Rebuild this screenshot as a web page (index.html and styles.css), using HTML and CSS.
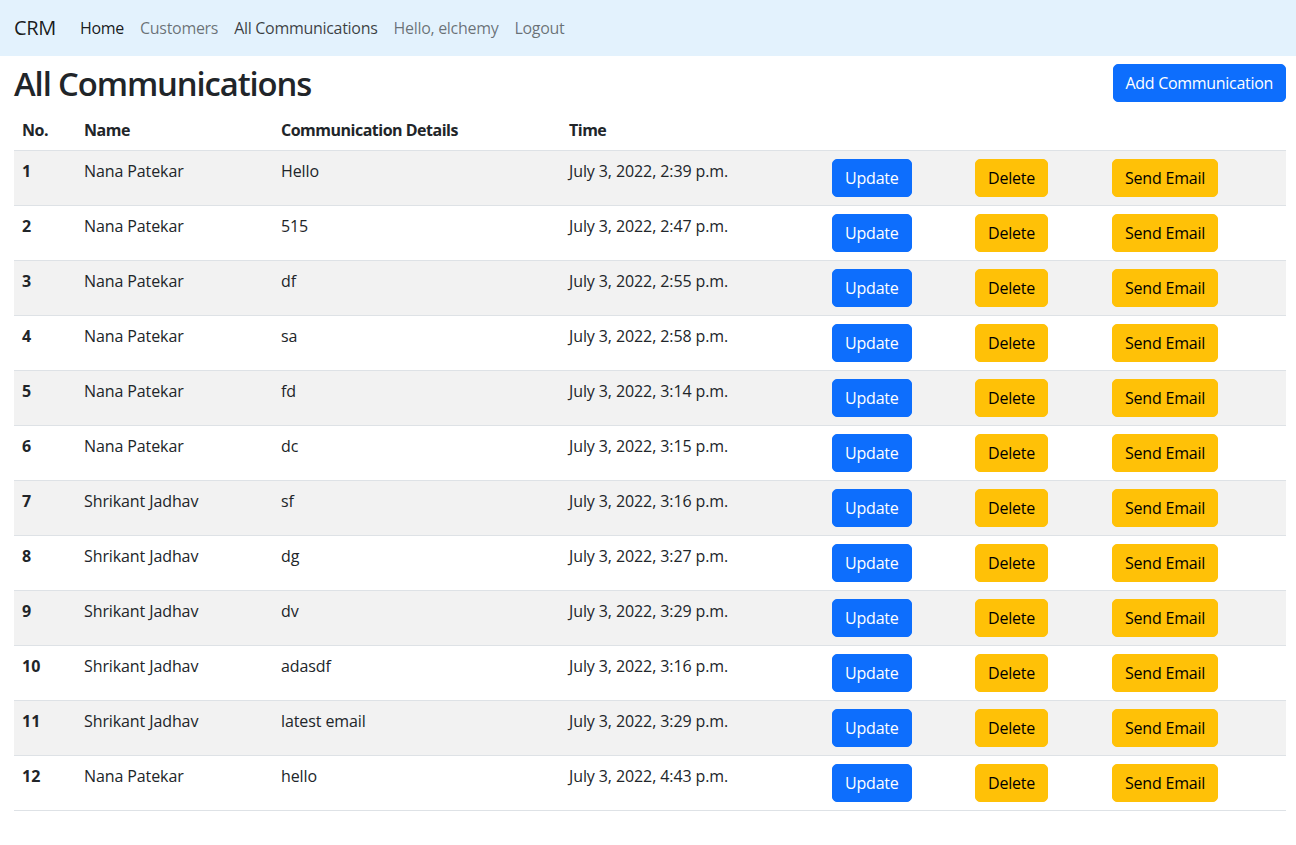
FILE: index.html
```html
<!DOCTYPE html>
<html lang="en">
<head>
<meta charset="utf-8">
<title>CRM - All Communications</title>
<link rel="stylesheet" href="styles.css">
</head>
<body>
<nav class="navbar">
  <a class="brand" href="#">CRM</a>
  <ul class="nav">
    <li><a class="nav-link active" href="#">Home</a></li>
    <li><a class="nav-link" href="#">Customers</a></li>
    <li><a class="nav-link current" href="#">All Communications</a></li>
    <li><a class="nav-link" href="#">Hello, elchemy</a></li>
    <li><a class="nav-link" href="#">Logout</a></li>
  </ul>
</nav>
<main class="page">
  <div class="page-head">
    <h2 class="title">All Communications</h2>
    <a class="btn btn-primary btn-add" href="#">Add Communication</a>
  </div>
  <table class="table">
    <colgroup>
      <col class="c-no"><col class="c-name"><col class="c-details"><col class="c-time"><col class="c-upd"><col class="c-del"><col class="c-mail">
    </colgroup>
    <thead>
      <tr><th>No.</th><th>Name</th><th>Communication Details</th><th>Time</th><th></th><th></th><th></th></tr>
    </thead>
    <tbody>
      <tr><th>1</th><td>Nana Patekar</td><td>Hello</td><td>July 3, 2022, 2:39 p.m.</td><td><a class="btn btn-primary" href="#">Update</a></td><td><a class="btn btn-warning" href="#">Delete</a></td><td><a class="btn btn-warning" href="#">Send Email</a></td></tr>
      <tr><th>2</th><td>Nana Patekar</td><td>515</td><td>July 3, 2022, 2:47 p.m.</td><td><a class="btn btn-primary" href="#">Update</a></td><td><a class="btn btn-warning" href="#">Delete</a></td><td><a class="btn btn-warning" href="#">Send Email</a></td></tr>
      <tr><th>3</th><td>Nana Patekar</td><td>df</td><td>July 3, 2022, 2:55 p.m.</td><td><a class="btn btn-primary" href="#">Update</a></td><td><a class="btn btn-warning" href="#">Delete</a></td><td><a class="btn btn-warning" href="#">Send Email</a></td></tr>
      <tr><th>4</th><td>Nana Patekar</td><td>sa</td><td>July 3, 2022, 2:58 p.m.</td><td><a class="btn btn-primary" href="#">Update</a></td><td><a class="btn btn-warning" href="#">Delete</a></td><td><a class="btn btn-warning" href="#">Send Email</a></td></tr>
      <tr><th>5</th><td>Nana Patekar</td><td>fd</td><td>July 3, 2022, 3:14 p.m.</td><td><a class="btn btn-primary" href="#">Update</a></td><td><a class="btn btn-warning" href="#">Delete</a></td><td><a class="btn btn-warning" href="#">Send Email</a></td></tr>
      <tr><th>6</th><td>Nana Patekar</td><td>dc</td><td>July 3, 2022, 3:15 p.m.</td><td><a class="btn btn-primary" href="#">Update</a></td><td><a class="btn btn-warning" href="#">Delete</a></td><td><a class="btn btn-warning" href="#">Send Email</a></td></tr>
      <tr><th>7</th><td>Shrikant Jadhav</td><td>sf</td><td>July 3, 2022, 3:16 p.m.</td><td><a class="btn btn-primary" href="#">Update</a></td><td><a class="btn btn-warning" href="#">Delete</a></td><td><a class="btn btn-warning" href="#">Send Email</a></td></tr>
      <tr><th>8</th><td>Shrikant Jadhav</td><td>dg</td><td>July 3, 2022, 3:27 p.m.</td><td><a class="btn btn-primary" href="#">Update</a></td><td><a class="btn btn-warning" href="#">Delete</a></td><td><a class="btn btn-warning" href="#">Send Email</a></td></tr>
      <tr><th>9</th><td>Shrikant Jadhav</td><td>dv</td><td>July 3, 2022, 3:29 p.m.</td><td><a class="btn btn-primary" href="#">Update</a></td><td><a class="btn btn-warning" href="#">Delete</a></td><td><a class="btn btn-warning" href="#">Send Email</a></td></tr>
      <tr><th>10</th><td>Shrikant Jadhav</td><td>adasdf</td><td>July 3, 2022, 3:16 p.m.</td><td><a class="btn btn-primary" href="#">Update</a></td><td><a class="btn btn-warning" href="#">Delete</a></td><td><a class="btn btn-warning" href="#">Send Email</a></td></tr>
      <tr><th>11</th><td>Shrikant Jadhav</td><td>latest email</td><td>July 3, 2022, 3:29 p.m.</td><td><a class="btn btn-primary" href="#">Update</a></td><td><a class="btn btn-warning" href="#">Delete</a></td><td><a class="btn btn-warning" href="#">Send Email</a></td></tr>
      <tr><th>12</th><td>Nana Patekar</td><td>hello</td><td>July 3, 2022, 4:43 p.m.</td><td><a class="btn btn-primary" href="#">Update</a></td><td><a class="btn btn-warning" href="#">Delete</a></td><td><a class="btn btn-warning" href="#">Send Email</a></td></tr>
    </tbody>
  </table>
</main>
</body>
</html>
```
FILE: styles.css
```css
* { box-sizing: border-box; }
html, body { margin: 0; padding: 0; }
body {
  font-family: "Open Sans", "Noto Sans", "Liberation Sans", sans-serif;
  font-size: 16px;
  line-height: 1.5;
  color: #212529;
  background: #fff;
}
a { text-decoration: none; }

.navbar {
  display: flex;
  align-items: center;
  height: 56px;
  padding: 8px 14px;
  background: #e3f2fd;
}
.brand {
  font-size: 20px;
  line-height: 30px;
  padding: 5px 0;
  margin-right: 16px;
  color: rgba(0,0,0,.9);
  letter-spacing: -0.3px;
}
.nav {
  display: flex;
  list-style: none;
  margin: 0;
  padding: 0;
}
.nav-link {
  display: block;
  padding: 8px 8px;
  color: rgba(0,0,0,.55);
  letter-spacing: -0.3px;
}
.nav-link.active { color: rgba(0,0,0,.9); }
.nav-link.current { color: rgba(0,0,0,.75); }

.page {
  padding: 8px 10px 0 14px;
}
.page-head {
  display: flex;
  justify-content: space-between;
  align-items: flex-start;
  margin-bottom: 6px;
}
.title {
  margin: 0;
  font-size: 32.8px;
  font-weight: 600;
  line-height: 40px;
  letter-spacing: -1.1px;
}

.btn {
  display: inline-block;
  padding: 6px 12px;
  font-size: 16px;
  line-height: 24px;
  border: 1px solid transparent;
  border-radius: 5px;
  text-align: center;
  white-space: nowrap;
  letter-spacing: -0.2px;
}
.btn-add { letter-spacing: -0.3px; }
.btn-primary { background: #0d6efd; border-color: #0d6efd; color: #fff; }
.btn-warning { background: #ffc107; border-color: #ffc107; color: #000; }

.table {
  width: 100%;
  border-collapse: collapse;
  table-layout: fixed;
}
.c-no { width: 62px; }
.c-name { width: 197px; }
.c-details { width: 288px; }
.c-time { width: 263px; }
.c-upd { width: 143px; }
.c-del { width: 137px; }
.c-mail { width: 182px; }
.table th, .table td {
  padding: 8px;
  text-align: left;
  vertical-align: top;
  border-bottom: 1px solid #dee2e6;
  line-height: 24px;
}
.table th { font-weight: 700; }
.table thead th { letter-spacing: -0.5px; }
.table td { letter-spacing: -0.1px; }
.table tbody tr:nth-child(odd) { background: #f2f2f2; }
```
